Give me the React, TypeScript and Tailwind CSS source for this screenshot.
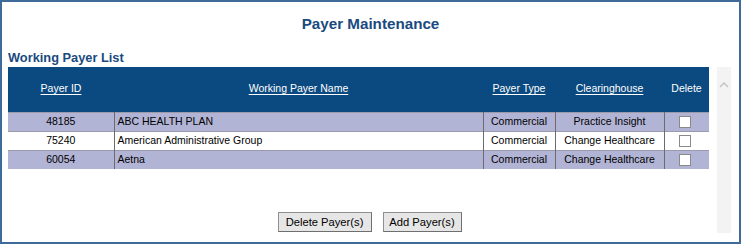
import React from "react";

type Payer = {
  id: string;
  name: string;
  type: string;
  clearinghouse: string;
};

const payers: Payer[] = [
  { id: "48185", name: "ABC HEALTH PLAN", type: "Commercial", clearinghouse: "Practice Insight" },
  { id: "75240", name: "American Administrative Group", type: "Commercial", clearinghouse: "Change Healthcare" },
  { id: "60054", name: "Aetna", type: "Commercial", clearinghouse: "Change Healthcare" },
];

function HeaderLink({ children }: { children: React.ReactNode }) {
  return <span className="underline underline-offset-2 cursor-pointer">{children}</span>;
}

export default function App() {
  return (
    <div className="w-[741px] h-[245px] bg-white font-['Liberation_Sans',Arial,sans-serif]">
      <div className="h-[244px] border-2 border-[#3f6b9a] flex flex-col">
        <h1 className="text-center text-[15.2px] font-bold text-[#1a4a80] pt-[12px] leading-[19px]">
          Payer Maintenance
        </h1>
        <div className="flex flex-1 mt-[17px]">
          <div className="w-[701px] ml-[6px] flex flex-col">
            <h2 className="text-[12.8px] font-bold text-[#1a4a80] leading-[16px] mb-[1px]">
              Working Payer List
            </h2>
            <table className="w-[701px] border-collapse text-[10.5px] text-black">
              <thead>
                <tr className="bg-[#0b4a80] text-white h-[45px]">
                  <th className="w-[106px] font-normal"><HeaderLink>Payer ID</HeaderLink></th>
                  <th className="w-[369px] font-normal"><HeaderLink>Working Payer Name</HeaderLink></th>
                  <th className="w-[72px] font-normal"><HeaderLink>Payer Type</HeaderLink></th>
                  <th className="w-[109px] font-normal"><HeaderLink>Clearinghouse</HeaderLink></th>
                  <th className="font-normal">Delete</th>
                </tr>
              </thead>
              <tbody>
                {payers.map((p, i) => (
                  <tr
                    key={p.id}
                    className={`h-[19px] leading-[13px] border-t border-[#9a9aaa] ${i % 2 === 0 ? "bg-[#b2b4d6]" : "bg-white"}`}
                  >
                    <td className="text-center border-r border-[#6b6b6b]">{p.id}</td>
                    <td className="pl-[3px] border-r border-[#6b6b6b]">{p.name}</td>
                    <td className="text-center border-r border-[#6b6b6b]">{p.type}</td>
                    <td className="text-center border-r border-[#6b6b6b]">{p.clearinghouse}</td>
                    <td className="text-center pr-[4px]">
                      <span className="inline-block align-middle w-[12px] h-[12px] bg-white border border-[#8a8a8a]" />
                    </td>
                  </tr>
                ))}
              </tbody>
            </table>
            <div className="flex justify-center gap-[11px] mt-[43px] pl-[22px]">
              <button className="h-[20px] w-[94px] text-[11.2px] leading-[16px] bg-[#e6e6e6] border border-[#8f8f8f] border-b-[#6f6f6f] border-r-[#6f6f6f] text-black">
                Delete Payer(s)
              </button>
              <button className="h-[20px] w-[79px] text-[11.2px] leading-[16px] bg-[#e6e6e6] border border-[#8f8f8f] border-b-[#6f6f6f] border-r-[#6f6f6f] text-black">
                Add Payer(s)
              </button>
            </div>
          </div>
          <div className="ml-[8px] mt-[17px] mb-[9px] w-[14px] bg-[#f3f3f3] flex justify-center pt-[15px]">
            <svg width="10" height="6" viewBox="0 0 10 6" fill="none">
              <path d="M1 5L5 1L9 5" stroke="#c4c4c4" strokeWidth="1.5" />
            </svg>
          </div>
        </div>
      </div>
    </div>
  );
}
